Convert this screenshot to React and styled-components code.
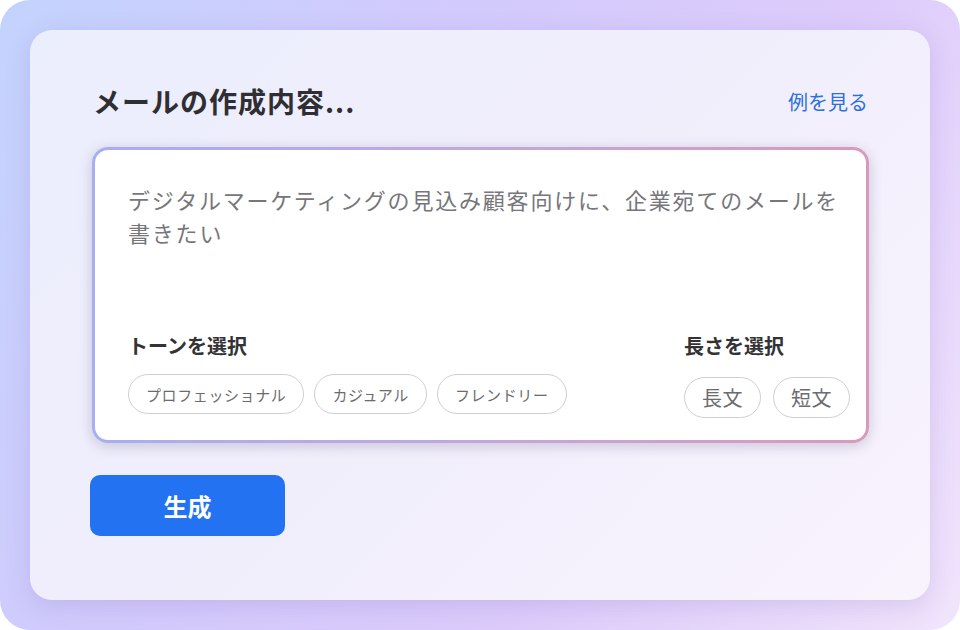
import React from 'react';
import styled, { createGlobalStyle } from 'styled-components';

const GlobalStyle = createGlobalStyle`
  html, body {
    margin: 0;
    padding: 0;
    background: #ffffff;
  }
  body {
    font-family: "Noto Sans CJK JP", "Noto Sans", sans-serif;
  }
  * {
    box-sizing: border-box;
  }
`;

const Frame = styled.div`
  width: 960px;
  height: 630px;
  border-radius: 30px;
  padding: 30px;
  background: linear-gradient(120deg, #c3d3fd 0%, #d2cafc 35%, #dccbfb 65%, #f1e4fc 100%);
`;

const Card = styled.div`
  width: 900px;
  height: 570px;
  border-radius: 22px;
  padding: 52px 60px 0 60px;
  display: flex;
  flex-direction: column;
  background: linear-gradient(135deg, #ebeefd 0%, #f1eefc 50%, #f8f3fd 100%);
  box-shadow: 0 6px 24px rgba(110, 90, 170, 0.18);
`;

const Header = styled.div`
  display: flex;
  justify-content: space-between;
  align-items: center;
  padding: 0 2px 0 3px;
  height: 38px;
`;

const Title = styled.h1`
  margin: 0;
  font-size: 28px;
  font-weight: 700;
  letter-spacing: 1px;
  color: #2f2f33;
`;

const ExampleLink = styled.a`
  font-size: 20px;
  color: #2c70df;
  text-decoration: none;
  cursor: pointer;
  margin-top: 1px;
`;

const InputBox = styled.div`
  margin: 27px 1px 0 2px;
  height: 296px;
  border-radius: 16px;
  border: 3px solid transparent;
  background:
    linear-gradient(#ffffff, #ffffff) padding-box,
    linear-gradient(90deg, #a7aef2 0%, #c2a7dc 50%, #d999bc 100%) border-box;
  box-shadow: 0 3px 14px rgba(40, 30, 70, 0.2);
  padding: 33px 16px 22px 33px;
  display: flex;
  flex-direction: column;
  justify-content: space-between;
`;

const Placeholder = styled.p`
  margin: 0;
  font-size: 22px;
  letter-spacing: 1.8px;
  line-height: 33px;
  color: #76767b;
`;

const Options = styled.div`
  display: flex;
  justify-content: space-between;
  align-items: flex-start;
`;

const Group = styled.div`
  display: flex;
  flex-direction: column;
  gap: ${(p) => p.$gap}px;
`;

const Label = styled.div`
  font-size: 20px;
  font-weight: 700;
  line-height: 24px;
  color: #333336;
`;

const Chips = styled.div`
  display: flex;
  gap: ${(p) => p.$gap}px;
`;

const Chip = styled.button`
  height: ${(p) => (p.$large ? 41 : 40)}px;
  padding: 0 17px;
  border: 1px solid #cfcfd3;
  border-radius: 21px;
  background: #ffffff;
  font-family: "Noto Sans CJK JP", "Noto Sans", sans-serif;
  font-size: ${(p) => (p.$large ? 20 : 15)}px;
  letter-spacing: ${(p) => (p.$large ? 0.5 : 0.6)}px;
  color: #6b6b70;
  display: flex;
  align-items: center;
  cursor: pointer;
`;

const GenerateButton = styled.button`
  margin-top: 32px;
  width: 195px;
  height: 61px;
  border: none;
  border-radius: 10px;
  background: #2272f2;
  color: #ffffff;
  font-family: "Noto Sans CJK JP", "Noto Sans", sans-serif;
  font-size: 24px;
  font-weight: 700;
  cursor: pointer;
`;

const tones = ['プロフェッショナル', 'カジュアル', 'フレンドリー'];
const lengths = ['長文', '短文'];

export default function App() {
  return (
    <>
      <GlobalStyle />
      <Frame>
        <Card>
          <Header>
            <Title>メールの作成内容...</Title>
            <ExampleLink>例を見る</ExampleLink>
          </Header>
          <InputBox>
            <Placeholder>
              デジタルマーケティングの見込み顧客向けに、企業宛てのメールを書きたい
            </Placeholder>
            <Options>
              <Group $gap={16}>
                <Label>トーンを選択</Label>
                <Chips $gap={10}>
                  {tones.map((t) => (
                    <Chip key={t}>{t}</Chip>
                  ))}
                </Chips>
              </Group>
              <Group $gap={19}>
                <Label>長さを選択</Label>
                <Chips $gap={12}>
                  {lengths.map((l) => (
                    <Chip key={l} $large>
                      {l}
                    </Chip>
                  ))}
                </Chips>
              </Group>
            </Options>
          </InputBox>
          <GenerateButton>生成</GenerateButton>
        </Card>
      </Frame>
    </>
  );
}
